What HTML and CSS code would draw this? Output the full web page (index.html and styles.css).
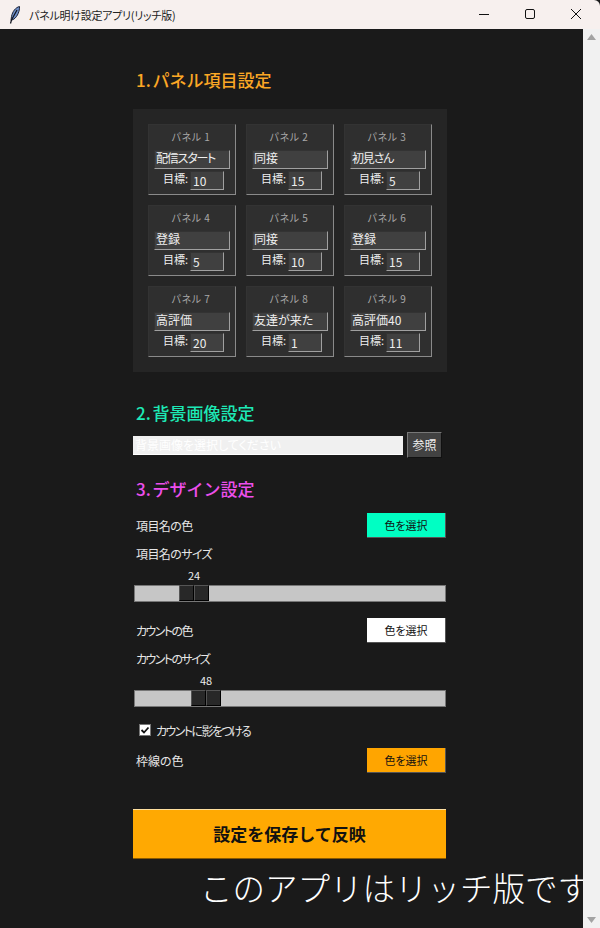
FILE: index.html
```html
<!DOCTYPE html>
<html lang="ja">

<head>
    <meta charset="UTF-8">
    <meta name="viewport" content="width=device-width, initial-scale=1.0">
    <title>パネル明け設定アプリ(リッチ版)</title>
    <link rel="stylesheet" href="styles.css">
</head>

<body>

    <div class="titlebar">
        <svg class="app-icon" width="16" height="20" viewBox="0 0 16 20">
            <path d="M12.5 1.5C8.5 2.5 5.5 6.500 4.500 11.500L4 15.500L7 14C10.500 11.500 12.800 6 12.500 1.500Z" fill="#6f8fc8" stroke="#1c2438" stroke-width="1"/>
            <path d="M10 5L4.500 15L3.500 18.500" fill="none" stroke="#10131c" stroke-width="1.200"/>
        </svg>
        <span class="app-title">パネル明け設定アプリ(リッチ版)</span>
        <div class="win-buttons">
            <svg width="46" height="28" viewBox="0 0 46 28"><path d="M18 13.500H28" stroke="#111" stroke-width="1"/></svg>
            <svg width="46" height="28" viewBox="0 0 46 28"><rect x="18.500" y="8.500" width="9" height="9" rx="1.500" fill="none" stroke="#111" stroke-width="1"/></svg>
            <svg width="46" height="28" viewBox="0 0 46 28"><path d="M18 8L28 18M28 8L18 18" stroke="#111" stroke-width="1"/></svg>
        </div>
    </div>

    <div class="window-body">
        <div class="content">
            <div class="column">
                <h2 class="heading heading-orange">1. パネル項目設定</h2>

                <div class="panel-grid">
                    <div class="panel">
                        <div class="panel-name">パネル 1</div>
                        <div class="entry entry-name entry-kana">配信スタート</div>
                        <div class="goal-row"><span class="goal-label">目標:</span><span class="entry entry-goal">10</span></div>
                    </div>
                    <div class="panel">
                        <div class="panel-name">パネル 2</div>
                        <div class="entry entry-name">同接</div>
                        <div class="goal-row"><span class="goal-label">目標:</span><span class="entry entry-goal">15</span></div>
                    </div>
                    <div class="panel">
                        <div class="panel-name">パネル 3</div>
                        <div class="entry entry-name entry-kana">初見さん</div>
                        <div class="goal-row"><span class="goal-label">目標:</span><span class="entry entry-goal">5</span></div>
                    </div>
                    <div class="panel">
                        <div class="panel-name">パネル 4</div>
                        <div class="entry entry-name">登録</div>
                        <div class="goal-row"><span class="goal-label">目標:</span><span class="entry entry-goal">5</span></div>
                    </div>
                    <div class="panel">
                        <div class="panel-name">パネル 5</div>
                        <div class="entry entry-name">同接</div>
                        <div class="goal-row"><span class="goal-label">目標:</span><span class="entry entry-goal">10</span></div>
                    </div>
                    <div class="panel">
                        <div class="panel-name">パネル 6</div>
                        <div class="entry entry-name">登録</div>
                        <div class="goal-row"><span class="goal-label">目標:</span><span class="entry entry-goal">15</span></div>
                    </div>
                    <div class="panel">
                        <div class="panel-name">パネル 7</div>
                        <div class="entry entry-name">高評価</div>
                        <div class="goal-row"><span class="goal-label">目標:</span><span class="entry entry-goal">20</span></div>
                    </div>
                    <div class="panel">
                        <div class="panel-name">パネル 8</div>
                        <div class="entry entry-name">友達が来た</div>
                        <div class="goal-row"><span class="goal-label">目標:</span><span class="entry entry-goal">1</span></div>
                    </div>
                    <div class="panel">
                        <div class="panel-name">パネル 9</div>
                        <div class="entry entry-name">高評価40</div>
                        <div class="goal-row"><span class="goal-label">目標:</span><span class="entry entry-goal">11</span></div>
                    </div>
                </div>

                <h2 class="heading heading-teal">2. 背景画像設定</h2>
                <div class="file-row">
                    <div class="file-entry">背景画像を選択してください</div>
                    <div class="browse-btn">参照</div>
                </div>

                <h2 class="heading heading-pink">3. デザイン設定</h2>

                <div class="color-row">
                    <span class="label label-item">項目名の色</span>
                    <div class="color-btn color-teal">色を選択</div>
                </div>
                <div class="label label-item size-label">項目名のサイズ</div>
                <div class="scale">
                    <div class="scale-value" style="left: 61px">24</div>
                    <div class="scale-trough">
                        <div class="scale-thumb" style="left: 44px"><span class="thumb-half"></span><span class="thumb-half"></span></div>
                    </div>
                </div>

                <div class="color-row color-row-2">
                    <span class="label label-kana">カウントの色</span>
                    <div class="color-btn color-white">色を選択</div>
                </div>
                <div class="label label-kana size-label">カウントのサイズ</div>
                <div class="scale">
                    <div class="scale-value" style="left: 73px">48</div>
                    <div class="scale-trough">
                        <div class="scale-thumb" style="left: 56px"><span class="thumb-half"></span><span class="thumb-half"></span></div>
                    </div>
                </div>

                <div class="check-row">
                    <svg class="check-box" width="12" height="12" viewBox="0 0 12 12">
                        <rect x="0.500" y="0.500" width="11" height="11" fill="#fff" stroke="#777"/>
                        <path d="M2.500 6L5 8.500L9.500 3.500" fill="none" stroke="#111" stroke-width="1.800"/>
                    </svg>
                    <span class="label label-kana">カウントに影をつける</span>
                </div>

                <div class="color-row color-row-3">
                    <span class="label">枠線の色</span>
                    <div class="color-btn color-orange">色を選択</div>
                </div>

                <div class="save-btn">設定を保存して反映</div>
            </div>
            <div class="rich-note">このアプリはリッチ版です</div>
        </div>

        <div class="scrollbar">
            <svg width="17" height="17" viewBox="0 0 17 17"><path d="M8.500 5L13 11H4Z" fill="#a3a3a3"/></svg>
            <svg width="17" height="17" viewBox="0 0 17 17"><path d="M4 6H13L8.500 12Z" fill="#a3a3a3"/></svg>
        </div>
    </div>

</body>

</html>
```

FILE: styles.css
```css
html, body {
    margin: 0;
    height: 100%;
    overflow: hidden;
}
html {
    background: #1a1a1a;
}
body {
    font-family: "Noto Sans CJK JP", "Liberation Sans", sans-serif;
    font-feature-settings: "palt";
    color: #e6e6e6;
    display: flex;
    flex-direction: column;
}

/* タイトルバー */
.titlebar {
    height: 29px;
    flex: none;
    display: flex;
    align-items: center;
    background: #f7f0ee;
    border-top-right-radius: 6px;
    color: #222;
    font-size: 11px;
    letter-spacing: -0.25px;
}
.app-icon {
    margin-left: 7px;
}
.app-title {
    margin-left: 6px;
}
.win-buttons {
    margin-left: auto;
    display: flex;
    margin-right: 1px;
}

.window-body {
    flex: 1;
    display: flex;
    min-height: 0;
}
.content {
    flex: 1;
    min-width: 0;
    overflow: hidden;
}
.column {
    width: 313px;
    margin-left: 133px;
}
.scrollbar {
    width: 17px;
    flex: none;
    background: #f1f1f1;
    display: flex;
    flex-direction: column;
    justify-content: space-between;
}

.heading {
    margin: 0 0 0 3px;
    font-size: 17px;
    line-height: 22px;
    font-weight: 500;
    font-feature-settings: normal;
    word-spacing: -2px;
}
.heading-orange {
    color: #fba725;
    padding-top: 40px;
}
.heading-teal {
    color: #1de9b6;
    margin-top: 30px;
}
.heading-pink {
    color: #ec4fec;
    margin-top: 20px;
}

/* パネル */
.panel-grid {
    margin-top: 18px;
    width: 284px;
    padding: 15px;
    background: #252525;
    display: grid;
    grid-template-columns: repeat(3, 88px);
    grid-auto-rows: 71px;
    gap: 10px;
}
.panel {
    box-sizing: border-box;
    background: #2f2f2f;
    border: 1px solid;
    border-color: #333 #8a8a8a #8a8a8a #333;
    padding: 0 5px;
}
.panel-name {
    height: 25px;
    line-height: 24px;
    text-align: center;
    font-size: 10px;
    letter-spacing: 0.5px;
    color: #a8a8a8;
    padding-right: 2px;
}
.entry {
    box-sizing: border-box;
    background: #404040;
    border: 1px solid;
    border-color: #333 #a0a0a0 #a0a0a0 #333;
    color: #eee;
    font-size: 12px;
    white-space: nowrap;
    overflow: hidden;
    padding-left: 1px;
}
.entry-name {
    width: 76px;
    height: 19px;
    line-height: 13px;
}
.entry-kana {
    letter-spacing: -1.2px;
}
.goal-row {
    margin-top: 2px;
    display: flex;
    padding-left: 9px;
}
.goal-label {
    flex: none;
    width: 27px;
    font-size: 11px;
    line-height: 15px;
    white-space: nowrap;
    color: #f0f0f0;
}
.entry-goal {
    width: 34px;
    height: 19px;
    line-height: 18px;
    padding-left: 2px;
}

/* 背景画像 */
.file-row {
    margin-top: 8px;
    display: flex;
    align-items: center;
}
.file-entry {
    box-sizing: border-box;
    width: 270px;
    height: 19px;
    background: #f0f0f0;
    border-bottom: 1px solid #fff;
    color: #fff;
    font-size: 12px;
    line-height: 18px;
    padding-left: 2px;
}
.browse-btn {
    box-sizing: border-box;
    margin-left: 4px;
    width: 35px;
    height: 26px;
    background: #424242;
    border: 1px solid;
    border-color: #777 #111 #111 #777;
    color: #eee;
    font-size: 12px;
    line-height: 23px;
    text-align: center;
}

/* デザイン */
.label {
    font-size: 12px;
    color: #e6e6e6;
}
.label-item {
    letter-spacing: -0.6px;
}
.label-kana {
    letter-spacing: -1.6px;
}
.color-row {
    display: flex;
    justify-content: space-between;
    align-items: center;
    padding-left: 3px;
    margin-top: 13px;
}
.color-row-2 {
    margin-top: 16px;
}
.color-row-3 {
    margin-top: 9px;
}
.color-btn {
    box-sizing: border-box;
    width: 79px;
    height: 25px;
    border-right: 1px solid #555;
    border-bottom: 1px solid #555;
    color: #111;
    font-size: 11px;
    line-height: 24px;
    text-align: center;
}
.color-teal {
    background: #00ffc3;
}
.color-white {
    background: #fff;
}
.color-orange {
    background: #ffa500;
}
.size-label {
    margin-top: 6px;
    padding-left: 3px;
    line-height: 20px;
}
.scale {
    position: relative;
    margin-top: 4px;
    padding-top: 17px;
}
.scale-value {
    position: absolute;
    top: 0;
    width: 0;
    display: flex;
    justify-content: center;
    font-size: 11px;
    line-height: 15px;
    color: #eee;
}
.scale-trough {
    position: relative;
    box-sizing: border-box;
    margin-left: 1px;
    width: 312px;
    height: 17px;
    background: #c6c6c6;
    border: 1px solid #777;
}
.scale-thumb {
    position: absolute;
    top: -1px;
    width: 30px;
    height: 16px;
    display: flex;
}
.thumb-half {
    box-sizing: border-box;
    flex: 1;
    background: #282828;
    border: 1px solid;
    border-color: #555 #000 #000 #555;
}
.check-row {
    display: flex;
    align-items: center;
    gap: 5px;
    margin-top: 14px;
    padding-left: 6px;
    height: 18px;
}

/* 保存ボタン */
.save-btn {
    box-sizing: border-box;
    margin-top: 36px;
    width: 313px;
    height: 50px;
    background: #ffa902;
    border-top: 1px solid #ffe0a0;
    border-bottom: 1px solid #8a5a00;
    color: #111;
    font-size: 17px;
    font-weight: 700;
    font-feature-settings: normal;
    line-height: 47px;
    text-align: center;
}
.rich-note {
    margin-left: 200px;
    margin-top: 5px;
    font-size: 32.500px;
    line-height: 46px;
    font-weight: 300;
    font-feature-settings: normal;
    color: #fff;
    white-space: nowrap;
}
```
